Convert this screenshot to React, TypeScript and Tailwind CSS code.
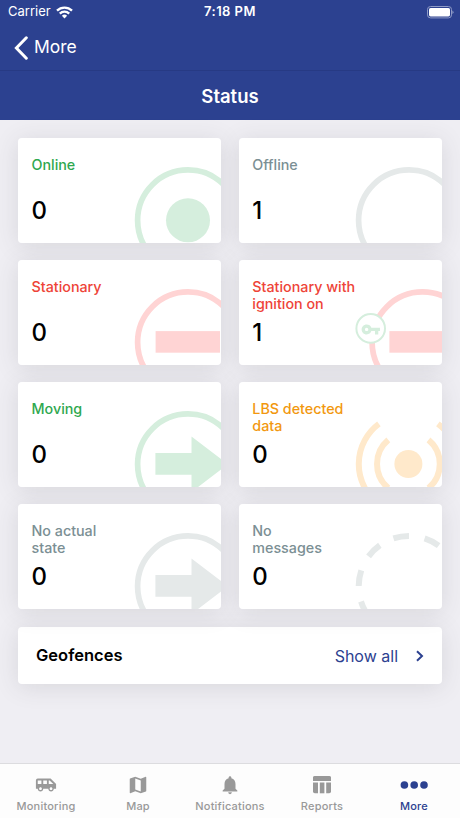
import React from 'react';
import { MdAirportShuttle, MdMap, MdNotifications, MdVpnKey } from 'react-icons/md';

const GREEN = '#d5eedd';
const RED = '#ffd4d4';
const GRAY = '#e5e9e9';
const ORANGE = '#ffe9cb';

function Ring({ color, cx = 170 }) {
  return <circle cx={cx} cy="82.3" r="50.4" fill="none" stroke={color} strokeWidth="5.7" />;
}

function Arrow({ color }) {
  return <path d="M137.4 71.1H173.5V54.6L210 82.3L173.5 110V92.7H137.4Z" fill={color} />;
}

const cards = [
  {
    title: 'Online',
    value: 0,
    color: 'text-[#2fa84f]',
    art: (
      <>
        <Ring color={GREEN} />
        <circle cx="170" cy="82.3" r="22" fill={GREEN} />
      </>
    ),
  },
  {
    title: 'Offline',
    value: 1,
    color: 'text-[#7b8f94]',
    art: <Ring color={GRAY} />,
  },
  {
    title: 'Stationary',
    value: 0,
    color: 'text-[#ee4438]',
    art: (
      <>
        <Ring color={RED} />
        <rect x="137.6" y="71.1" width="64.4" height="21.6" fill={RED} />
      </>
    ),
  },
  {
    title: 'Stationary with\nignition on',
    value: 1,
    color: 'text-[#ee4438]',
    art: (
      <>
        <Ring color={RED} cx={183.5} />
        <rect x="150.4" y="71.1" width="60" height="21.6" fill={RED} />
        <circle cx="131.7" cy="68.4" r="14.3" fill="#fff" stroke={GREEN} strokeWidth="2" />
        <MdVpnKey x="121.8" y="59.4" size={20} color={GREEN} />
      </>
    ),
  },
  {
    title: 'Moving',
    value: 0,
    color: 'text-[#2fa84f]',
    art: (
      <>
        <Ring color={GREEN} />
        <Arrow color={GREEN} />
      </>
    ),
  },
  {
    title: 'LBS detected\ndata',
    value: 0,
    color: 'text-[#f2980f]',
    art: (
      <>
        <circle cx="169.4" cy="82" r="14" fill={ORANGE} />
        <g fill="none" stroke={ORANGE} strokeWidth="6">
          <path d="M149.3 57.9A31.4 31.4 0 0 0 149.3 106.1" />
          <path d="M189.5 57.9A31.4 31.4 0 0 1 189.5 106.1" />
          <path d="M139.9 41.9A50 50 0 0 0 139.9 122.1" />
          <path d="M198.9 41.9A50 50 0 0 1 198.9 122.1" />
        </g>
      </>
    ),
  },
  {
    title: 'No actual\nstate',
    value: 0,
    color: 'text-[#7b8f94]',
    art: (
      <>
        <Ring color={GRAY} />
        <Arrow color={GRAY} />
      </>
    ),
  },
  {
    title: 'No\nmessages',
    value: 0,
    color: 'text-[#7b8f94]',
    art: (
      <circle
        cx="170"
        cy="82.3"
        r="50.3"
        fill="none"
        stroke={GRAY}
        strokeWidth="6"
        strokeDasharray="15.8 15.8"
        transform="rotate(-108 170 82.3)"
      />
    ),
  },
];

function StatusCard({ title, value, color, art }) {
  return (
    <div className="rounded-[4px] shadow-[0_3px_24px_rgba(60,60,70,0.13)]">
      <div className="relative h-[104.5px] overflow-hidden rounded-[4px] bg-white pl-[13.5px] pt-[18px]">
        <svg className="absolute left-0 top-0" width="204" height="105" viewBox="0 0 204 105">
          {art}
        </svg>
        <div className="relative flex h-[37px] w-[112px] flex-col">
          <span className={`whitespace-pre-line text-[14.3px] font-medium leading-[17.2px] ${color}`}>
            {title}
          </span>
        </div>
        <div className="relative text-[24px] font-medium leading-[35px]">{value}</div>
      </div>
    </div>
  );
}

function Header() {
  return (
    <header className="bg-[#2c4190] text-white">
      <div className="h-[71px] border-b border-[#273a84]">
        <div className="grid h-6 grid-cols-3 items-center px-2 text-[13px]">
          <div className="flex items-center gap-[5px]">
            <span>Carrier</span>
            <svg width="17" height="13" viewBox="0 0 17 13" fill="none" stroke="#fff" strokeWidth="2.3">
              <path d="M1 4.6A10.8 10.8 0 0 1 16 4.6" />
              <path d="M3.8 7.6A6.6 6.6 0 0 1 13.2 7.6" />
              <path d="M8.5 12.4L5.9 9.8A3.7 3.7 0 0 1 11.1 9.8Z" fill="#fff" stroke="none" />
            </svg>
          </div>
          <span className="text-center font-semibold tracking-[0.45px]">7:18 PM</span>
          <svg className="-mr-[3px] justify-self-end" width="28" height="13" viewBox="0 0 28 13">
            <rect x="0.5" y="0.5" width="24" height="11.4" rx="3" fill="none" stroke="#8f9bc6" />
            <rect x="2" y="2" width="21" height="8.4" rx="1.6" fill="#fff" />
            <path d="M25.4 4.4A2 2 0 0 1 25.4 8Z" fill="#8f9bc6" />
          </svg>
        </div>
        <div className="flex h-[47px] items-center gap-[6px] pl-[14px]">
          <svg width="14" height="24" viewBox="0 0 14 24" fill="none" stroke="#fff" strokeWidth="3" strokeLinecap="round">
            <path d="M12.3 1.8L2.4 12L12.3 22.2" />
          </svg>
          <span className="text-[17.5px]">More</span>
        </div>
      </div>
      <h1 className="flex h-[49px] items-center justify-center pt-[2px] text-[18.5px] font-semibold">Status</h1>
    </header>
  );
}

function TabBar() {
  const tabs = [
    { name: 'Monitoring', icon: <MdAirportShuttle size={22} /> },
    { name: 'Map', icon: <MdMap size={22} /> },
    { name: 'Notifications', icon: <MdNotifications size={22} /> },
    {
      name: 'Reports',
      icon: (
        <svg width="18" height="18" viewBox="0 0 18 18" fill="currentColor">
          <path d="M0 5V2A1.8 1.8 0 0 1 1.8 0H16.2A1.8 1.8 0 0 1 18 2V5Z" />
          <path d="M0 6.5H5V17.3H1.8A1.8 1.8 0 0 1 0 15.5Z" />
          <path d="M6.8 6.5H11.4V17.3H6.8Z" />
          <path d="M13.2 6.5H18V15.5A1.8 1.8 0 0 1 16.2 17.3H13.2Z" />
        </svg>
      ),
    },
    {
      name: 'More',
      icon: (
        <svg width="28" height="8" viewBox="0 0 28 8" fill="currentColor">
          <circle cx="4.4" cy="4" r="3.8" />
          <circle cx="14.2" cy="4" r="3.8" />
          <circle cx="24" cy="4" r="3.8" />
        </svg>
      ),
      active: true,
    },
  ];

  return (
    <nav className="grid h-[55px] grid-cols-5 border-t border-[#dcdcdf] bg-[#fdfdfd]">
      {tabs.map((tab) => (
        <div
          key={tab.name}
          className={`flex flex-col items-center pt-[10px] text-[11px] font-medium ${tab.active ? 'text-[#2c4190]' : 'text-[#999999]'}`}
        >
          <div className="flex h-[22px] items-center">{tab.icon}</div>
          <span className="mt-[2px] leading-[16px] tracking-[0.2px]">{tab.name}</span>
        </div>
      ))}
    </nav>
  );
}

function App() {
  return (
    <div className="flex h-[818px] w-[460px] flex-col overflow-hidden bg-[#efeef3] font-['Inter',sans-serif] text-black">
      <Header />
      <main className="flex-1 px-[18px] pt-[18px]">
        <div className="grid grid-cols-2 gap-x-[17.6px] gap-y-[17.6px]">
          {cards.map((card) => (
            <StatusCard key={card.title} {...card} />
          ))}
        </div>
        <div className="mt-[18px] flex h-[57.5px] items-center rounded-[4px] bg-white pl-[18px] pr-[17px] shadow-[0_3px_24px_rgba(60,60,70,0.13)]">
          <span className="flex-1 text-[16.5px] font-semibold">Geofences</span>
          <span className="text-[16px] text-[#2c4190]">Show all</span>
          <svg className="ml-[17px]" width="10" height="12" viewBox="0 0 10 12" fill="none" stroke="#2c4190" strokeWidth="2">
            <path d="M2 1.2L7 6L2 10.8" />
          </svg>
        </div>
      </main>
      <TabBar />
    </div>
  );
}

export default App;
